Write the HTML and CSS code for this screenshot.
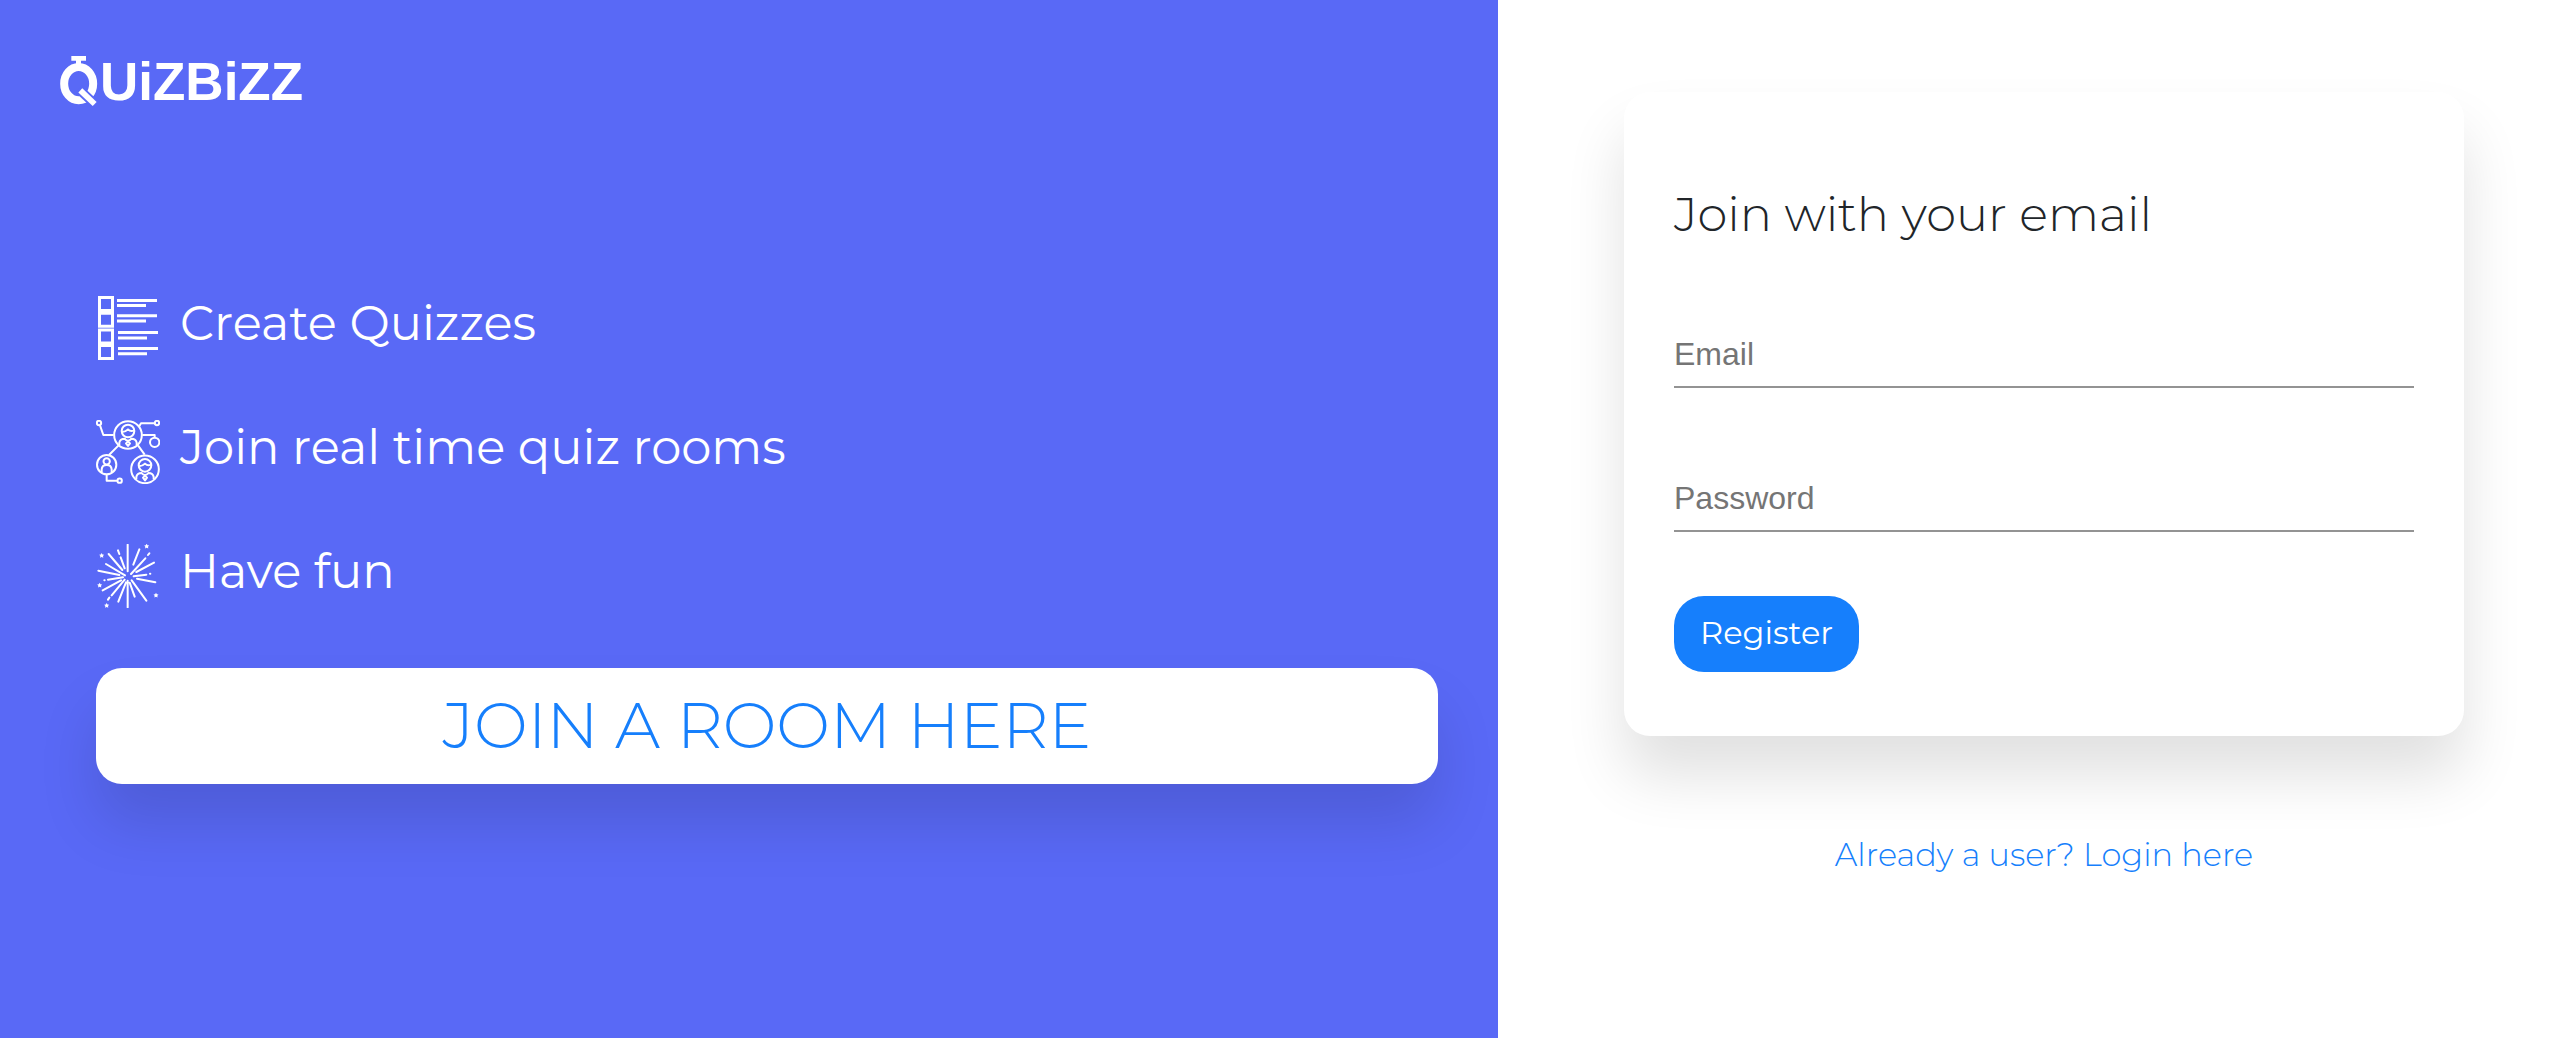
FILE: index.html
```html
<!DOCTYPE html>
<html lang="en">
<head>
<meta charset="utf-8">
<meta name="viewport" content="width=device-width, initial-scale=1">
<title>QuizBizz</title>
<link rel="stylesheet" href="styles.css">
</head>
<body>
<div class="page">
  <section class="intro">
    <a class="logo" href="#">
      <svg class="logo-mark" viewBox="60 48 120 156" role="img" aria-label="Q">
        <ellipse cx="116" cy="131" rx="43.500" ry="50" fill="none" stroke="#fff" stroke-width="24"/>
        <path d="M94 48h44v14h-15v12h-15V62H94z" fill="#fff"/>
        <path d="M116 147L178 205" stroke="#5969f6" stroke-width="28"/>
        <path d="M121 151L164 192" stroke="#fff" stroke-width="17"/>
      </svg>
      <span class="logo-text">UiZBiZZ</span>
    </a>
    <div class="intro-body">
      <ul class="features">
        <li class="feature">
          <svg class="icon" viewBox="0 0 64 64" aria-hidden="true">
            <g fill="none" stroke="#fff" stroke-width="3">
              <path d="M3.5 1.500h13v13h-13zM3.500 17.200h13v13h-13zM3.500 33.900h13v13h-13zM3.500 49.500h13v13h-13z"/>
              <path d="M21 4.500h40M21 9.500h29M21 19.800h40M21 25h29M22 36.500h40M22 42h29M22 52.600h40M22 57.700h29"/>
            </g>
          </svg>
          <span class="feature-name">Create Quizzes</span>
        </li>
        <li class="feature">
          <svg class="icon" viewBox="18 30 192 192" aria-hidden="true">
            <g fill="none" stroke="#fff" stroke-width="6" stroke-linejoin="round">
              <circle cx="27" cy="39" r="6.500"/>
              <path d="M30 46L40 75H71M147 50L153 40H194M157 75H194V83M88 104L57 135M144 106L164 134M50 195V212H81"/>
              <circle cx="201" cy="39" r="6.500"/>
              <circle cx="194" cy="97" r="14"/>
              <circle cx="89" cy="212" r="6.500"/>
              <circle cx="50" cy="164" r="29"/>
              <circle cx="50" cy="154" r="9.500"/>
              <path d="M35 187V178Q36 165 50 165T65 178V187"/>
              <circle cx="114" cy="75" r="41.500"/>
              <circle cx="165" cy="178" r="41.500"/>
              <g id="person">
                <circle cx="114" cy="63" r="19"/>
                <path d="M96 66Q106 66 114 58Q122 66 132 61M88 105V98Q90 86 104 86Q108 92 114 92T124 86Q138 86 140 98V105M114 94L108 100L114 108L120 100Z"/>
              </g>
              <use href="#person" x="51" y="103"/>
            </g>
          </svg>
          <span class="feature-name">Join real time quiz rooms</span>
        </li>
        <li class="feature">
          <svg class="icon" viewBox="18 27 192 192" aria-hidden="true">
            <path fill="none" stroke="#fff" stroke-width="6" stroke-linecap="round" d="M113 29V109M113 137V217M148 43L130 89M84 46L88 57M92 67L104 100M56 57L97 105M178 55L174 60M166 70L123 117M48 87L105 121M192 83L139 111M25 107L88 120M169 119L131 124M180 116H181M196 142L141 131M54 134L99 127M43 136H44M38 166L93 136M169 197L125 136M134 185L119 143M85 200L108 142M65 181L104 134M58 188L54 194"/>
            <path id="star" fill="#fff" d="M170 26l2.500 4.500 5 .800-3.500 3.700.800 5.500-4.800-2.500-4.800 2.500.800-5.500-3.500-3.700 5-.800z"/>
            <use href="#star" x="-135" y="28"/>
            <use href="#star" x="-141" y="117"/>
            <use href="#star" x="-120" y="178"/>
            <use href="#star" x="28" y="147"/>
          </svg>
          <span class="feature-name">Have fun</span>
        </li>
      </ul>
      <button class="join-room" type="button">JOIN A ROOM HERE</button>
    </div>
  </section>
  <main class="signup">
    <form class="card">
      <h1 class="card-title">Join with your email</h1>
      <input class="field" type="email" placeholder="Email" aria-label="Email">
      <input class="field" type="password" placeholder="Password" aria-label="Password">
      <button class="register" type="submit">Register</button>
    </form>
    <a class="login-link" href="#">Already a user? Login here</a>
  </main>
</div>
</body>
</html>
```
FILE: styles.css
```css
* {
  box-sizing: border-box;
}

body {
  margin: 0;
  font-family: Montserrat, Inter, sans-serif;
  color: #212529;
  background: #fff;
}

.page {
  display: grid;
  grid-template-columns: 1498fr 1054fr;
  min-height: 100vh;
}

.intro {
  padding: 54px 60px;
  background: #5969f6;
  color: #fff;
}

.logo {
  display: flex;
  align-items: center;
  height: 56px;
  color: #fff;
  text-decoration: none;
}

.logo-mark {
  width: 40px;
  height: 52px;
}

.logo-text {
  font-family: "Liberation Sans", sans-serif;
  font-size: 53px;
  font-weight: 700;
  line-height: 56px;
}

.intro-body {
  padding: 186px 0 0 36px;
}

.features {
  display: grid;
  gap: 60px;
  margin: 0 0 60px;
  padding: 0;
  list-style: none;
}

.feature {
  display: flex;
  align-items: flex-start;
  gap: 20px;
  height: 64px;
  font-size: 48px;
  line-height: 54px;
}

.icon {
  width: 64px;
  height: 64px;
  flex: none;
}

.join-room {
  display: block;
  width: 100%;
  height: 116px;
  padding: 0 0 2px;
  border: 0;
  border-radius: 26px;
  background: #fff;
  color: #167ffc;
  font: 300 64px/76px Montserrat, Inter, sans-serif;
  box-shadow: 0 40px 60px rgba(0, 0, 0, 0.12);
}

.signup {
  display: flex;
  flex-direction: column;
  align-items: center;
  gap: 99px;
  padding: 92px 88px 0 126px;
}

.card {
  width: 100%;
  padding: 92px 50px 64px;
  border-radius: 26px;
  background: #fff;
  box-shadow: 0 40px 60px rgba(0, 0, 0, 0.12);
}

.card-title {
  margin: 0 0 84px;
  font-size: 48px;
  font-weight: 300;
  line-height: 60px;
}

.field {
  display: block;
  width: 100%;
  height: 60px;
  margin-bottom: 84px;
  padding: 0 0 6px;
  border: 0;
  border-bottom: 2px solid #939393;
  background: none;
  color: #212529;
  font: 32px/40px "Liberation Sans", sans-serif;
}

.field::placeholder {
  color: #757575;
}

.field + .register {
  margin-top: -20px;
}

.register {
  display: block;
  height: 76px;
  padding: 0 26px 2px;
  border: 0;
  border-radius: 30px;
  background: #167ffc;
  color: #fff;
  font: 32px/40px Montserrat, Inter, sans-serif;
}

.login-link {
  color: #167ffc;
  font-size: 32px;
  font-weight: 300;
  line-height: 40px;
  text-decoration: none;
}
```
